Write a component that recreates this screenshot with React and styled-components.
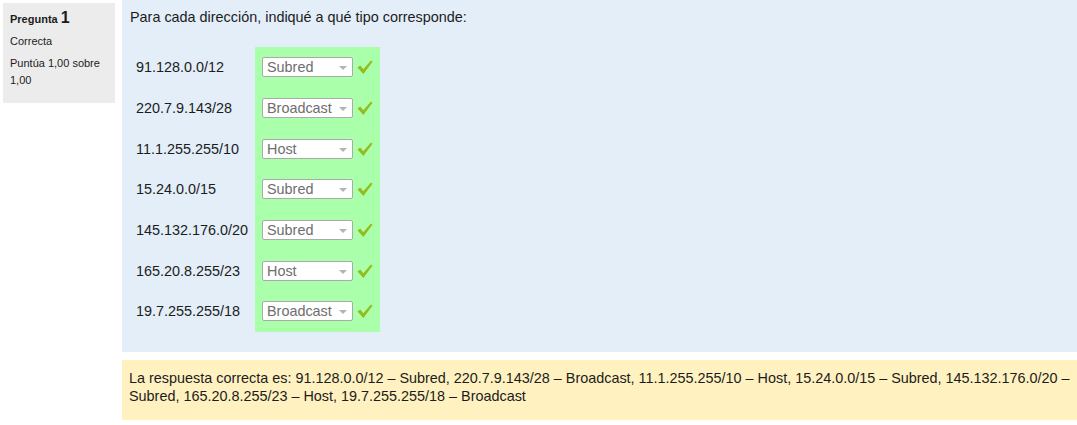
import React from "react";
import styled, { createGlobalStyle } from "styled-components";

const GlobalStyle = createGlobalStyle`
  body {
    margin: 0;
    background: #ffffff;
    font-family: "Liberation Sans", Arial, sans-serif;
    color: #1c1c1c;
  }
`;

const Page = styled.div`
  display: flex;
  align-items: flex-start;
  width: 1077px;
`;

const InfoBox = styled.div`
  flex: 0 0 auto;
  width: 112px;
  box-sizing: border-box;
  margin: 3px 0 0 3px;
  padding: 7px 7px 14px;
  background: #ececec;
  font-size: 11px;
`;

const QTitle = styled.h3`
  margin: 0;
  font-size: 11px;
  font-weight: bold;
  line-height: 1;
`;

const QNum = styled.span`
  font-size: 16px;
`;

const InfoLine = styled.div`
  margin-top: ${(p) => p.$gap || 6}px;
  line-height: 17px;
`;

const Main = styled.div`
  flex: 1;
  margin-left: 7px;
  display: flex;
  flex-direction: column;
  gap: 8px;
`;

const Formulation = styled.div`
  background: #e3eef9;
  padding: 9px 8px 20px;
`;

const Prompt = styled.p`
  margin: 0 0 21px;
  font-size: 14.4px;
  line-height: 17px;
`;

const Table = styled.div`
  display: flex;
  flex-direction: column;
`;

const Row = styled.div`
  display: flex;
  align-items: stretch;
`;

const Label = styled.div`
  width: 125px;
  box-sizing: border-box;
  padding-left: 6px;
  display: flex;
  align-items: center;
  font-size: 14.4px;
`;

const AnswerCell = styled.div`
  display: flex;
  align-items: center;
  gap: 4px;
  padding: 10.35px 7px;
  height: 40.7px;
  box-sizing: border-box;
  background: ${(p) => (p.$correct ? "#aaffaa" : "#ffaaaa")};
`;

const Select = styled.div`
  position: relative;
  width: 91px;
  height: 20px;
  box-sizing: border-box;
  border: 1px solid #aaaaaa;
  border-radius: 2px;
  background: #ffffff;
  color: #6e6e6e;
  font-size: 14.4px;
  line-height: 18px;
  padding-left: 4px;
`;

const Arrow = styled.span`
  position: absolute;
  right: 5px;
  top: 8px;
  width: 0;
  height: 0;
  border-left: 4px solid transparent;
  border-right: 4px solid transparent;
  border-top: 4px solid #b4b4b4;
`;

const Outcome = styled.div`
  background: #fff2c0;
  padding: 9px 7px 15px;
  font-size: 14.4px;
  line-height: 18px;
`;

const Tick = () => (
  <svg width="16" height="16" viewBox="0 0 16 16">
    <polygon
      points="0.5,8.5 3.2,6.6 6.3,10.2 14,1.5 15.5,2.8 6.4,15"
      fill="#93bd1e"
    />
  </svg>
);

const rows = [
  ["91.128.0.0/12", "Subred"],
  ["220.7.9.143/28", "Broadcast"],
  ["11.1.255.255/10", "Host"],
  ["15.24.0.0/15", "Subred"],
  ["145.132.176.0/20", "Subred"],
  ["165.20.8.255/23", "Host"],
  ["19.7.255.255/18", "Broadcast"],
];

export default function App() {
  return (
    <>
      <GlobalStyle />
      <Page>
        <InfoBox>
          <QTitle>
            Pregunta <QNum>1</QNum>
          </QTitle>
          <InfoLine $gap={7}>Correcta</InfoLine>
          <InfoLine $gap={5}>Puntúa 1,00 sobre 1,00</InfoLine>
        </InfoBox>
        <Main>
          <Formulation>
            <Prompt>Para cada dirección, indiqué a qué tipo corresponde:</Prompt>
            <Table>
              {rows.map(([addr, type]) => (
                <Row key={addr}>
                  <Label>{addr}</Label>
                  <AnswerCell $correct>
                    <Select>
                      {type}
                      <Arrow />
                    </Select>
                    <Tick />
                  </AnswerCell>
                </Row>
              ))}
            </Table>
          </Formulation>
          <Outcome>
            La respuesta correcta es: 91.128.0.0/12 – Subred, 220.7.9.143/28 –
            Broadcast, 11.1.255.255/10 – Host, 15.24.0.0/15 – Subred,
            145.132.176.0/20 – Subred, 165.20.8.255/23 – Host, 19.7.255.255/18 –
            Broadcast
          </Outcome>
        </Main>
      </Page>
    </>
  );
}
